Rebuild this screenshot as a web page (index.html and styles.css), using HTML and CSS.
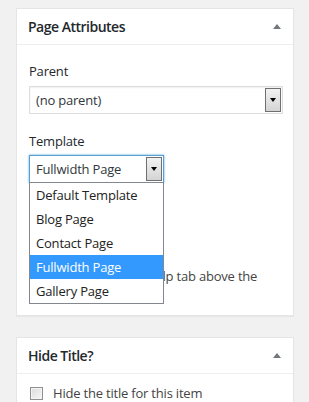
FILE: index.html
```html
<!DOCTYPE html>
<html>
<head>
<meta charset="utf-8">
<link rel="stylesheet" href="styles.css">
</head>
<body>
<div class="page">
  <div class="postbox">
    <div class="hndle">
      <h2>Page Attributes</h2>
      <span class="toggle"></span>
    </div>
    <div class="inside">
      <p class="label">Parent</p>
      <div class="select wide">
        <span class="value">(no parent)</span>
        <span class="btn"><span class="arrow"></span></span>
      </div>
      <p class="label">Template</p>
      <div class="select-wrap">
        <div class="select narrow focus">
          <span class="value">Fullwidth Page</span>
          <span class="btn"><span class="arrow"></span></span>
        </div>
        <ul class="dropdown">
          <li>Default Template</li>
          <li>Blog Page</li>
          <li>Contact Page</li>
          <li class="selected">Fullwidth Page</li>
          <li>Gallery Page</li>
        </ul>
      </div>
      <p class="label">Order</p>
      <div class="number">0</div>
      <p class="help">Need help? Use the Help tab above the screen title.</p>
    </div>
  </div>
  <div class="postbox">
    <div class="hndle">
      <h2>Hide Title?</h2>
      <span class="toggle"></span>
    </div>
    <div class="inside check-row">
      <span class="checkbox"></span>
      <span class="check-label">Hide the title for this item</span>
    </div>
  </div>
</div>
</body>
</html>
```
FILE: styles.css
```css
* { box-sizing: border-box; }
html, body { margin: 0; padding: 0; }
body {
  background: #f1f1f1;
  font-family: "Open Sans", "Noto Sans", sans-serif;
  font-size: 13px;
  letter-spacing: -0.2px;
  color: #444;
  width: 309px;
  height: 402px;
  overflow: hidden;
}
.page {
  padding: 8px 15px 0 16px;
  display: flex;
  flex-direction: column;
  gap: 21px;
}
.postbox {
  background: #fff;
  border: 1px solid #e5e5e5;
  box-shadow: 0 1px 1px rgba(0,0,0,.04);
}
.hndle {
  height: 36px;
  border-bottom: 1px solid #eee;
  display: flex;
  align-items: center;
  justify-content: space-between;
  padding: 0 12px 0 11px;
}
.hndle h2 {
  margin: 0;
  font-size: 14px;
  font-weight: 600;
  color: #23282d;
  letter-spacing: -0.5px;
}
.toggle {
  width: 0; height: 0;
  border-left: 4.5px solid transparent;
  border-right: 4.5px solid transparent;
  border-bottom: 5px solid #72777c;
  margin-top: -1px;
}
.inside {
  padding: 0 11px 12px 12px;
  display: flex;
  flex-direction: column;
  align-items: flex-start;
}
.label {
  margin: 0;
  line-height: 18px;
  color: #23282d;
}
.inside > .label:first-child { margin-top: 17px; }
.select {
  height: 28px;
  border: 1px solid #ddd;
  box-shadow: inset 0 1px 2px rgba(0,0,0,.07);
  background: #fff;
  display: flex;
  align-items: center;
  justify-content: space-between;
  padding: 1px 1px 1px 6px;
  color: #32373c;
  margin-top: 6px;
}
.select.wide { width: 254px; margin-bottom: 18px; }
.select-wrap { position: relative; margin-top: 5px; margin-bottom: 18px; }
.select.narrow { width: 135px; margin-top: 0; }
.select.focus {
  border-color: #5b9dd9;
  box-shadow: 0 0 2px rgba(30,140,190,.8);
}
.value { line-height: 18px; }
.btn {
  width: 16px;
  height: 100%;
  border: 1px solid #707070;
  background: linear-gradient(#f2f2f2, #d4d4d4);
  display: flex;
  align-items: center;
  justify-content: center;
}
.arrow {
  width: 0; height: 0;
  border-left: 3.5px solid transparent;
  border-right: 3.5px solid transparent;
  border-top: 4px solid #000;
}
.dropdown {
  position: absolute;
  left: 0;
  top: 27px;
  width: 135px;
  margin: 0;
  padding: 0;
  list-style: none;
  background: #fff;
  border: 1px solid #828790;
  z-index: 5;
}
.dropdown li {
  height: 24px;
  line-height: 24px;
  padding-left: 6px;
  color: #222;
  font-size: 13px;
}
.dropdown li.selected {
  background: #3399ff;
  color: #fff;
}
.number {
  width: 60px;
  height: 28px;
  border: 1px solid #ddd;
  margin-top: 6px;
  padding: 4px 6px;
  color: #32373c;
}
.help {
  margin: 14px 0 0;
  line-height: 18px;
  color: #444;
}
.check-row {
  flex-direction: row;
  align-items: center;
  padding-top: 10px;
  gap: 10px;
  padding-left: 13px;
}
.checkbox {
  width: 13px;
  height: 13px;
  border: 1px solid #8f8f8f;
  background: linear-gradient(135deg, #dcdcdc, #f6f6f6);
  box-shadow: inset 0 0 0 1px #f4f4f4;
}
.check-label { color: #444; line-height: 18px; }
```
